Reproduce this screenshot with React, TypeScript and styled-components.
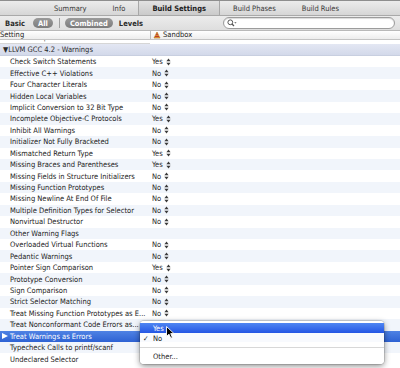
import { FC } from 'react';
import styled, { createGlobalStyle, css } from 'styled-components';

interface Setting {
  name: string;
  value?: 'Yes' | 'No';
}

const settings: Setting[] = [
  { name: 'Check Switch Statements', value: 'Yes' },
  { name: 'Effective C++ Violations', value: 'No' },
  { name: 'Four Character Literals', value: 'No' },
  { name: 'Hidden Local Variables', value: 'No' },
  { name: 'Implicit Conversion to 32 Bit Type', value: 'No' },
  { name: 'Incomplete Objective-C Protocols', value: 'Yes' },
  { name: 'Inhibit All Warnings', value: 'No' },
  { name: 'Initializer Not Fully Bracketed', value: 'No' },
  { name: 'Mismatched Return Type', value: 'Yes' },
  { name: 'Missing Braces and Parentheses', value: 'Yes' },
  { name: 'Missing Fields in Structure Initializers', value: 'No' },
  { name: 'Missing Function Prototypes', value: 'No' },
  { name: 'Missing Newline At End Of File', value: 'No' },
  { name: 'Multiple Definition Types for Selector', value: 'No' },
  { name: 'Nonvirtual Destructor', value: 'No' },
  { name: 'Other Warning Flags' },
  { name: 'Overloaded Virtual Functions', value: 'No' },
  { name: 'Pedantic Warnings', value: 'No' },
  { name: 'Pointer Sign Comparison', value: 'Yes' },
  { name: 'Prototype Conversion', value: 'No' },
  { name: 'Sign Comparison', value: 'No' },
  { name: 'Strict Selector Matching', value: 'No' },
  { name: 'Treat Missing Function Prototypes as E...', value: 'No' },
  { name: 'Treat Nonconformant Code Errors as...' },
  { name: 'Treat Warnings as Errors' },
  { name: 'Typecheck Calls to printf/scanf' },
  { name: 'Undeclared Selector' },
];

const SELECTED = 'Treat Warnings as Errors';

const GlobalStyle = createGlobalStyle`
  html, body {
    margin: 0;
    padding: 0;
    background: #ffffff;
  }
  body {
    font-family: "DejaVu Sans Condensed", "DejaVu Sans", sans-serif;
    font-size: 7.5px;
    color: #1a1a1a;
  }
`;

const Window = styled.div`
  width: 400px;
  height: 368px;
  overflow: hidden;
  display: flex;
  flex-direction: column;
  background: #ffffff;
`;

const TabBar = styled.div`
  height: 16px;
  box-sizing: border-box;
  display: flex;
  align-items: stretch;
  padding-left: 41px;
  border-top: 1px solid #8e8e8e;
  border-bottom: 1px solid #a9a9a9;
  background: linear-gradient(#ececec, #d6d6d6);
`;

const Tab = styled.div<{ $active?: boolean }>`
  display: flex;
  align-items: center;
  padding: 0 13px;
  color: #3a3a3a;
  ${(p) =>
    p.$active &&
    css`
      font-weight: bold;
      color: #202020;
      border-left: 1px solid #a8a8a8;
      border-right: 1px solid #a8a8a8;
      background: linear-gradient(#e2e2e2, #cacaca);
    `}
`;

const FilterBar = styled.div`
  height: 15px;
  box-sizing: border-box;
  display: flex;
  align-items: center;
  padding: 0 0 0 5px;
  background: linear-gradient(#ececec, #dedede);
  border-bottom: 1px solid #b9b9b9;
`;

const FilterLabel = styled.span`
  font-weight: bold;
  color: #2a2a2a;
  margin-right: 8px;
`;

const Pill = styled.span`
  display: inline-flex;
  align-items: center;
  height: 10px;
  padding: 0 5px;
  border-radius: 6px;
  background: linear-gradient(#9a9a9a, #7c7c7c);
  color: #ffffff;
  font-weight: bold;
  margin-right: 6px;
`;

const Divider = styled.span`
  width: 1px;
  height: 10px;
  background: #a0a0a0;
  margin-right: 5px;
`;

const Search = styled.div`
  margin-left: auto;
  margin-right: 5px;
  width: 172px;
  height: 12px;
  box-sizing: border-box;
  border: 1px solid #9c9c9c;
  border-radius: 6px;
  background: #ffffff;
  display: flex;
  align-items: center;
  padding-left: 3px;
  box-shadow: inset 0 1px 1px rgba(0, 0, 0, 0.15);
`;

const ColumnHeader = styled.div`
  height: 8px;
  display: grid;
  grid-template-columns: 150px 1fr;
  background: linear-gradient(#ffffff, #ededed);
  border-bottom: 1px solid #c4c4c4;
  line-height: 8px;
  overflow: hidden;
`;

const HeaderCell = styled.div<{ $divider?: boolean }>`
  display: flex;
  align-items: center;
  gap: 2px;
  padding-left: ${(p) => (p.$divider ? 2 : 0)}px;
  border-left: ${(p) => (p.$divider ? '1px solid #bdbdbd' : 'none')};
  color: #222222;
`;

const ClippedRow = styled.div`
  height: 4px;
  width: 150px;
  overflow: hidden;
  display: flex;
  align-items: flex-end;
  padding-left: 33px;
  box-sizing: border-box;
  color: #555555;
  border-bottom: 1px solid #d6d6d6;
  white-space: nowrap;
  line-height: 11px;
`;

const GroupHeader = styled.div`
  height: 11px;
  display: flex;
  align-items: center;
  padding-left: 3px;
  background: linear-gradient(#e3e7f3, #d3d9ea);
  border-bottom: 1px solid #c8cfe0;
  color: #2a2a2a;
`;

const List = styled.div`
  position: relative;
  flex: 1;
`;

const Row = styled.div<{ $alt: boolean; $selected: boolean }>`
  height: 11.45px;
  display: grid;
  grid-template-columns: 150px 1fr;
  align-items: center;
  position: relative;
  background: ${(p) => (p.$alt ? '#f1f5fb' : '#ffffff')};
  color: #222222;
  ${(p) =>
    p.$selected &&
    css`
      background: linear-gradient(#4f82e4, #2e62d3);
      color: #ffffff;
    `}
`;

const NameCell = styled.div`
  padding-left: 10px;
  white-space: nowrap;
  overflow: hidden;
`;

const ValueCell = styled.div`
  display: flex;
  align-items: center;
  gap: 3px;
  padding-left: 2px;
  color: #2a2a2a;
`;

const Disclosure = styled.span`
  position: absolute;
  left: 2px;
  top: 50%;
  transform: translateY(-50%);
  width: 0;
  height: 0;
  border-top: 3.5px solid transparent;
  border-bottom: 3.5px solid transparent;
  border-left: 6px solid #ffffff;
`;

const Menu = styled.div`
  position: absolute;
  left: 140px;
  top: 265px;
  width: 244px;
  padding: 2px 0 3px;
  background: rgba(255, 255, 255, 0.97);
  border-radius: 4px;
  box-shadow: 0 2px 6px rgba(0, 0, 0, 0.45), 0 0 0 1px rgba(0, 0, 0, 0.12);
`;

const MenuItem = styled.div<{ $highlight?: boolean }>`
  height: 10px;
  display: flex;
  align-items: center;
  padding-left: 13px;
  position: relative;
  color: #1c1c1c;
  ${(p) =>
    p.$highlight &&
    css`
      background: linear-gradient(#4f86f2, #2456e4);
      color: #ffffff;
    `}
`;

const Check = styled.span`
  position: absolute;
  left: 3px;
`;

const MenuSeparator = styled.div`
  height: 1px;
  margin: 4px 0 3px;
  background: #d8d8d8;
`;

const Cursor = styled.svg`
  position: absolute;
  left: 26px;
  top: 3px;
`;

const Stepper: FC = () => (
  <svg width="5" height="8" viewBox="0 0 5 8">
    <path d="M2.5 0.5 L4.6 3.2 H0.4 Z" fill="#3a3a3a" />
    <path d="M2.5 7.5 L4.6 4.8 H0.4 Z" fill="#3a3a3a" />
  </svg>
);

const SearchIcon: FC = () => (
  <svg width="10" height="8" viewBox="0 0 10 8">
    <circle cx="3.3" cy="3.3" r="2.4" fill="none" stroke="#555" strokeWidth="1" />
    <path d="M5 5 L7 7" stroke="#555" strokeWidth="1.2" />
    <path d="M7.2 3.2 L9.6 3.2 L8.4 4.6 Z" fill="#555" />
  </svg>
);

const SandboxIcon: FC = () => (
  <svg width="8" height="8" viewBox="0 0 8 8">
    <path d="M1 7 L4 1 L7 7 Z" fill="#e3a23a" stroke="#b26a14" strokeWidth="0.6" />
    <path d="M2 5.5 L6 5.5" stroke="#c0392b" strokeWidth="1" />
    <circle cx="4" cy="3.5" r="0.9" fill="#c0392b" />
  </svg>
);

export default function App() {
  return (
    <Window>
      <GlobalStyle />
      <TabBar>
        <Tab>Summary</Tab>
        <Tab>Info</Tab>
        <Tab $active>Build Settings</Tab>
        <Tab>Build Phases</Tab>
        <Tab>Build Rules</Tab>
      </TabBar>
      <FilterBar>
        <FilterLabel>Basic</FilterLabel>
        <Pill>All</Pill>
        <Divider />
        <Pill>Combined</Pill>
        <FilterLabel>Levels</FilterLabel>
        <Search>
          <SearchIcon />
        </Search>
      </FilterBar>
      <ColumnHeader>
        <HeaderCell>Setting</HeaderCell>
        <HeaderCell $divider>
          <SandboxIcon />
          Sandbox
        </HeaderCell>
      </ColumnHeader>
      <ClippedRow>
        <span>Preprocessor Macros Not Used In Precompiled Headers</span>
      </ClippedRow>
      <GroupHeader>▼LLVM GCC 4.2 - Warnings</GroupHeader>
      <List>
        {settings.map((s, i) => {
          const selected = s.name === SELECTED;
          return (
            <Row key={s.name} $alt={i % 2 === 1} $selected={selected}>
              {selected && <Disclosure />}
              <NameCell>{s.name}</NameCell>
              <ValueCell>
                {s.value && (
                  <>
                    {s.value}
                    <Stepper />
                  </>
                )}
              </ValueCell>
            </Row>
          );
        })}
        <Menu>
          <MenuItem $highlight>
            Yes
            <Cursor width="9" height="13" viewBox="0 0 9 13">
              <path
                d="M0.5 0.5 L0.5 10.5 L3 8.2 L4.8 12.2 L6.4 11.5 L4.7 7.6 L8 7.6 Z"
                fill="#000"
                stroke="#fff"
                strokeWidth="0.9"
              />
            </Cursor>
          </MenuItem>
          <MenuItem>
            <Check>✓</Check>
            No
          </MenuItem>
          <MenuSeparator />
          <MenuItem>Other...</MenuItem>
        </Menu>
      </List>
    </Window>
  );
}
